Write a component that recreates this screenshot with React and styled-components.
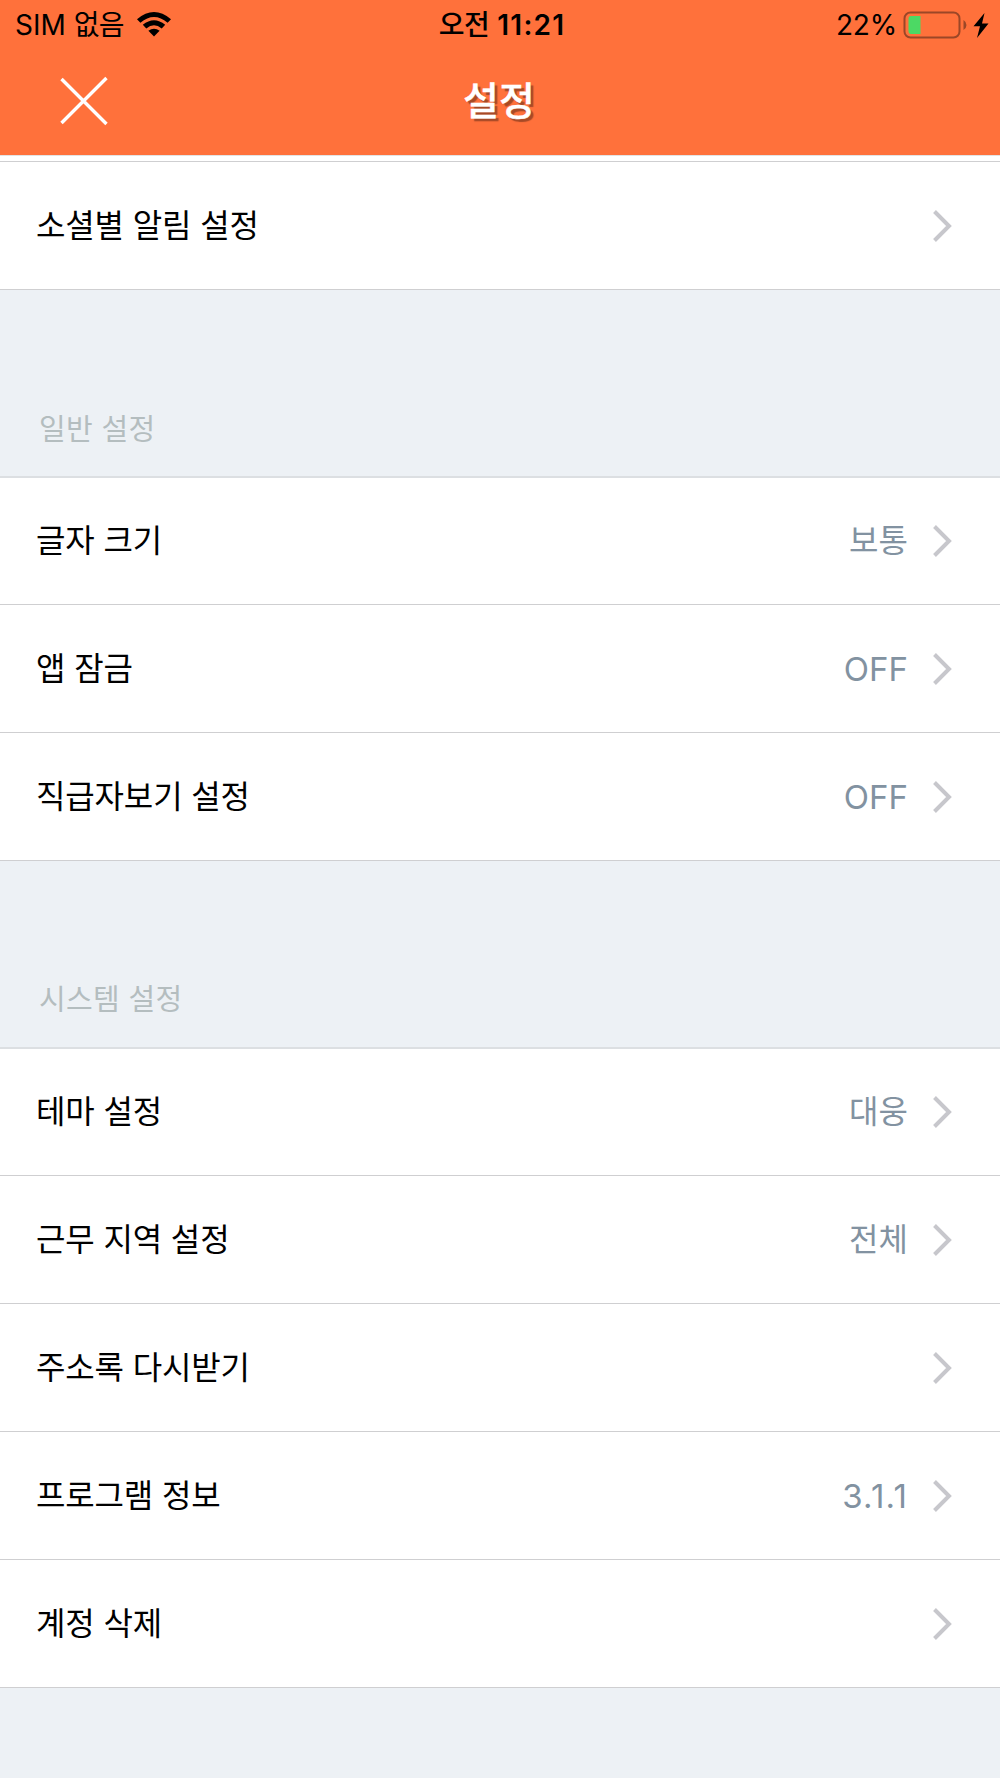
import React from 'react'
import styled, { createGlobalStyle } from 'styled-components'

const GlobalStyle = createGlobalStyle`
  * {
    box-sizing: border-box;
  }

  body {
    margin: 0;
    background: #edf1f5;
    font-family: Inter, 'Noto Sans CJK KR', sans-serif;
  }
`

const Screen = styled.div`
  display: flex;
  flex-direction: column;
  width: 1000px;
  height: 1778px;
  overflow: hidden;
  background: #edf1f5;
`

const TopBar = styled.header`
  height: 155px;
  background: #ff713b;
`

const StatusBar = styled.div`
  display: grid;
  grid-template-columns: 1fr auto 1fr;
  align-items: center;
  height: 50px;
  padding: 1px 11px 0 15px;
  color: #000;
  line-height: 49px;
`

const StatusGroup = styled.div`
  display: flex;
  align-items: center;
  justify-content: ${({ $end }) => ($end ? 'flex-end' : 'flex-start')};
`

const StatusText = styled.span`
  font-size: 28px;
  font-weight: ${({ $weight }) => $weight || 400};
  letter-spacing: ${({ $spacing }) => $spacing || 0};
  white-space: pre;
`

const StatusHangul = styled.span`
  font-size: 28px;
  font-weight: ${({ $weight }) => $weight || 400};
  letter-spacing: -0.6px;
`

const WifiIcon = styled.svg`
  margin: 0 0 3px 13px;
`

const BatteryIcon = styled.svg`
  margin: 0 -1px 2px 6px;
`

const NavBar = styled.div`
  display: grid;
  grid-template-columns: 1fr auto 1fr;
  align-items: center;
  height: 105px;
  padding: 0 62px 0 60px;
`

const CloseButton = styled.button`
  display: flex;
  width: 48px;
  height: 50px;
  margin-bottom: 3px;
  padding: 0;
  border: 0;
  background: none;
`

const Title = styled.h1`
  margin: 0 0 3px;
  color: #fff;
  font-size: 39px;
  font-weight: 500;
  line-height: 60px;
  text-shadow: 3px 3px 1px rgba(0, 0, 0, 0.35);
  -webkit-text-stroke: 0.4px #fff;
`

const ListEdge = styled.div`
  height: 7px;
  border-top: 1px solid #e3e3e3;
  border-bottom: 1px solid #cfcfd1;
  background: #fff;
`

const SectionTitle = styled.h2`
  display: flex;
  align-items: flex-end;
  height: 188px;
  margin: 0;
  padding: 0 39px ${({ $bottom }) => $bottom || 24}px;
  border-bottom: 2px solid #dcdfe2;
  color: #b4bdbf;
  font-size: 29px;
  font-weight: 400;
  line-height: 44px;
  letter-spacing: 0.3px;
`

const Row = styled.div`
  display: flex;
  align-items: center;
  height: ${({ $height }) => $height || 128}px;
  padding: 0 48.5px 0 36px;
  border-bottom: 1px solid #cfcfd1;
  background: #fff;
  font-size: 32px;
  line-height: 48px;
`

const Label = styled.span`
  flex: 1;
  color: #000;
  letter-spacing: -0.15px;
`

const Value = styled.span`
  margin-right: 24.5px;
  color: #8292a1;
  font-size: ${({ $latin }) => ($latin ? 33 : 32)}px;
  letter-spacing: ${({ $spacing }) => $spacing || 0}px;
`

const items = {
  general: [
    { label: '글자 크기', value: '보통', height: 127 },
    { label: '앱 잠금', value: 'OFF', latin: true },
    { label: '직급자보기 설정', value: 'OFF', latin: true },
  ],
  system: [
    { label: '테마 설정', value: '대웅', height: 127 },
    { label: '근무 지역 설정', value: '전체' },
    { label: '주소록 다시받기' },
    { label: '프로그램 정보', value: '3.1.1', latin: true, spacing: 1.2 },
    { label: '계정 삭제' },
  ],
}

const Wifi = () => (
  <WifiIcon width='34' height='25' viewBox='0 0 34 25'>
    <path d='M0 7.2 Q17 -7.2 34 7.2 L30.6 10.8 Q17 -1 3.4 10.8 Z' />
    <path d='M5.8 12.8 Q17 3.6 28.2 12.8 L24.7 16.4 Q17 10.2 9.3 16.4 Z' />
    <path d='M11.4 18.8 Q17 14.6 22.6 18.8 L17 24.6 Z' />
  </WifiIcon>
)

const Battery = () => (
  <BatteryIcon width='87' height='28' viewBox='0 0 87 28'>
    <rect x='1.5' y='1.5' width='55' height='25' rx='6' fill='none' stroke='#9b4727' strokeWidth='2' />
    <path d='M8 5 H17.500 V23 H8 Q5.500 23 5.500 20 V8 Q5.500 5 8 5 Z' fill='#4cd964' />
    <path d='M60.500 9 Q63.500 11 63.500 14 Q63.500 17 60.500 19 Z' fill='#9b4727' />
    <path d='M81.500 2 L70.500 15.200 H77 L74 27 L85.500 12.500 H79 Z' fill='#000' />
  </BatteryIcon>
)

const Chevron = () => (
  <svg width='19' height='32' viewBox='0 0 19 32'>
    <path d='M1.5 1.5 L16 16 L1.5 30.5' fill='none' stroke='#c7c7cc' strokeWidth='4' />
  </svg>
)

const SettingRow = ({ label, value, height, latin, spacing }) => (
  <Row $height={height}>
    <Label>{label}</Label>
    {value && (
      <Value $latin={latin} $spacing={spacing}>
        {value}
      </Value>
    )}
    <Chevron />
  </Row>
)

const App = () => {
  return (
    <Screen>
      <GlobalStyle />

      <TopBar>
        <StatusBar>
          <StatusGroup>
            <StatusText>
              SIM <StatusHangul>없음</StatusHangul>
            </StatusText>
            <Wifi />
          </StatusGroup>
          <StatusText $weight={600} $spacing='1.2px'>
            <StatusHangul $weight={500}>오전</StatusHangul> 11:21
          </StatusText>
          <StatusGroup $end>
            <StatusText $spacing='-0.2px'>22%</StatusText>
            <Battery />
          </StatusGroup>
        </StatusBar>

        <NavBar>
          <CloseButton aria-label='닫기'>
            <svg width='48' height='50' viewBox='0 0 48 50'>
              <path d='M1.5 3 L46.5 48 M46.5 2 L1.5 47' fill='none' stroke='#fff' strokeWidth='3.4' />
            </svg>
          </CloseButton>
          <Title>설정</Title>
        </NavBar>
      </TopBar>

      <ListEdge />
      <SettingRow label='소셜별 알림 설정' />

      <SectionTitle>일반 설정</SectionTitle>
      {items.general.map((item) => (
        <SettingRow key={item.label} {...item} />
      ))}

      <SectionTitle $bottom={25}>시스템 설정</SectionTitle>
      {items.system.map((item) => (
        <SettingRow key={item.label} {...item} />
      ))}
    </Screen>
  )
}

export default App
